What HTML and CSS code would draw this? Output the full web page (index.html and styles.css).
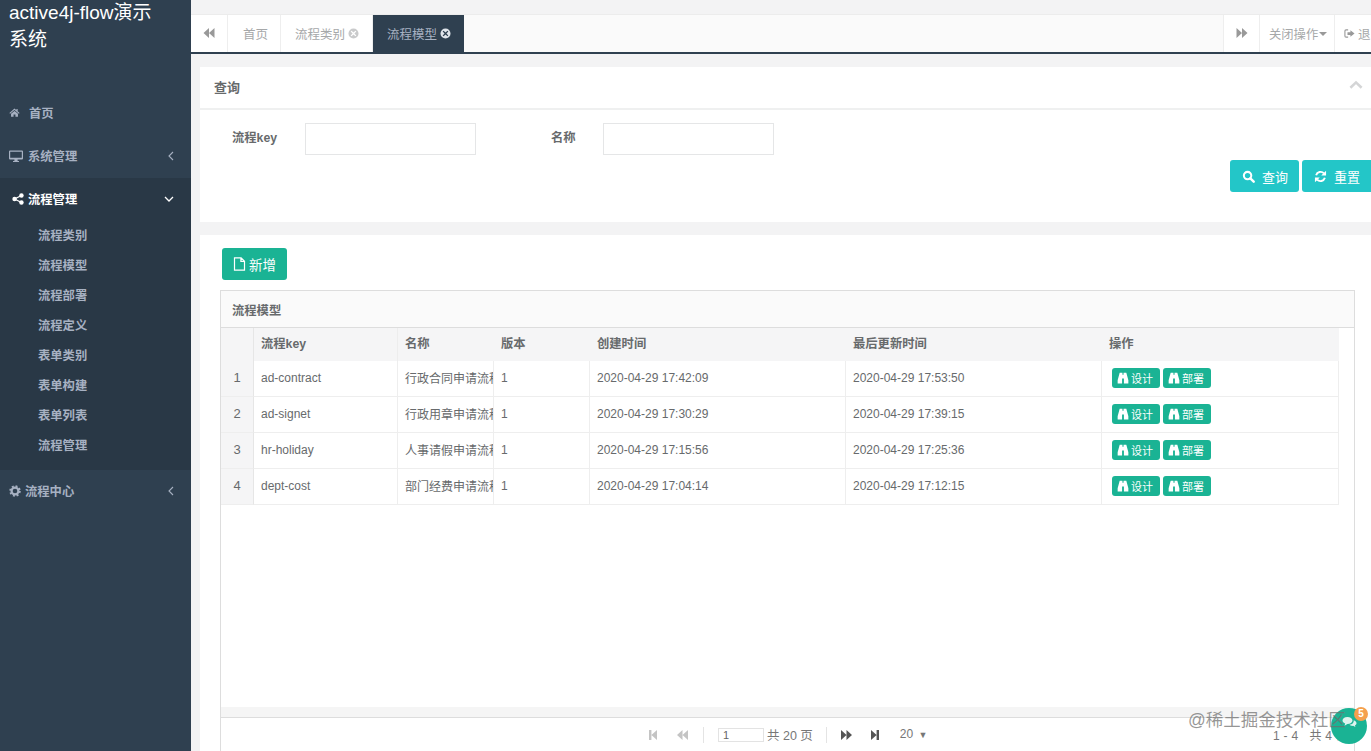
FILE: index.html
```html
<!DOCTYPE html>
<html lang="zh">
<head>
<meta charset="utf-8">
<title>active4j-flow演示系统</title>
<link rel="stylesheet" href="styles.css">
</head>
<body>
<svg class="defs" aria-hidden="true">
  <symbol id="i-home" viewBox="0 0 14 14"><path d="M7 2 L0.5 7.6 L1.4 8.6 L7 3.9 L12.6 8.6 L13.5 7.6 L11 5.4 V2.5 H9.4 V4 Z M7 5 L2.6 8.7 V12.5 H5.8 V9.5 H8.2 V12.5 H11.4 V8.7 Z"/></symbol>
  <symbol id="i-desktop" viewBox="0 0 14 14"><path fill-rule="evenodd" d="M1 1.5 H13 A1 1 0 0 1 14 2.5 V9.5 A1 1 0 0 1 13 10.5 H8.6 V12 H10 V13 H4 V12 H5.4 V10.5 H1 A1 1 0 0 1 0 9.5 V2.5 A1 1 0 0 1 1 1.5 Z M1.2 2.7 V8.8 H12.8 V2.7 Z"/></symbol>
  <symbol id="i-share" viewBox="0 0 14 14"><circle cx="3" cy="7" r="2.6"/><circle cx="11" cy="2.9" r="2.6"/><circle cx="11" cy="11.1" r="2.6"/><path d="M3 7 L11 2.9 M3 7 L11 11.1" stroke="currentColor" stroke-width="1.6"/></symbol>
  <symbol id="i-cog" viewBox="0 0 14 14"><circle cx="7" cy="7" r="4" fill="none" stroke="currentColor" stroke-width="2.6"/><circle cx="7" cy="7" r="5.6" fill="none" stroke="currentColor" stroke-width="2.2" stroke-dasharray="2.2 2.2"/></symbol>
  <symbol id="i-left" viewBox="0 0 8 12"><path d="M6 2 L2 6 L6 10" fill="none" stroke="currentColor" stroke-width="1.1"/></symbol>
  <symbol id="i-down" viewBox="0 0 12 8"><path d="M2 2 L6 6 L10 2" fill="none" stroke="currentColor" stroke-width="1.3"/></symbol>
  <symbol id="i-up" viewBox="0 0 12 8"><path d="M1.2 6.4 L6 1.8 L10.8 6.4" fill="none" stroke="currentColor" stroke-width="2.2"/></symbol>
  <symbol id="i-back" viewBox="0 0 12 12"><path d="M6 1 V11 L0.5 6 Z M11.5 1 V11 L6 6 Z"/></symbol>
  <symbol id="i-fwd" viewBox="0 0 12 12"><path d="M6 1 V11 L11.5 6 Z M0.5 1 V11 L6 6 Z"/></symbol>
  <symbol id="i-first" viewBox="0 0 10 12"><path d="M1 1 H3.4 V11 H1 Z M9 1 V11 L3.4 6 Z"/></symbol>
  <symbol id="i-last" viewBox="0 0 10 12"><path d="M9 1 H6.6 V11 H9 Z M1 1 V11 L6.6 6 Z"/></symbol>
  <symbol id="i-close" viewBox="0 0 12 12"><path fill-rule="evenodd" d="M6 .5 A5.5 5.5 0 1 1 6 11.5 A5.5 5.5 0 1 1 6 .5 Z M3.9 2.9 L2.9 3.9 L5 6 L2.9 8.1 L3.9 9.1 L6 7 L8.1 9.1 L9.1 8.1 L7 6 L9.1 3.9 L8.1 2.9 L6 5 Z"/></symbol>
  <symbol id="i-signout" viewBox="0 0 12 12"><path d="M4.5 2 H2.2 A1.2 1.2 0 0 0 1 3.2 V8.8 A1.2 1.2 0 0 0 2.2 10 H4.5" fill="none" stroke="currentColor" stroke-width="1.2"/><path d="M7 2.5 L11.5 6 L7 9.5 V7.5 H3.8 V4.5 H7 Z"/></symbol>
  <symbol id="i-search" viewBox="0 0 14 14"><circle cx="6" cy="6" r="4" fill="none" stroke="currentColor" stroke-width="2.2"/><path d="M9 9 L12.6 12.6" stroke="currentColor" stroke-width="2.6" stroke-linecap="round"/></symbol>
  <symbol id="i-refresh" viewBox="0 0 14 14"><path d="M2.3 5.6 A5 5 0 0 1 10.7 3.6" fill="none" stroke="currentColor" stroke-width="2.1"/><path d="M13 .8 V6 H7.8 Z"/><path d="M11.7 8.4 A5 5 0 0 1 3.3 10.4" fill="none" stroke="currentColor" stroke-width="2.1"/><path d="M1 13.2 V8 H6.2 Z"/></symbol>
  <symbol id="i-file" viewBox="0 0 12 14"><path d="M1 .8 H7.6 L11 4.2 V13.2 H1 Z M7.4 1 V4.4 H11" fill="none" stroke="currentColor" stroke-width="1.2"/></symbol>
  <symbol id="i-bino" viewBox="0 0 12 13"><path d="M2.4 .8 H5.4 V3 H6.6 V.8 H9.6 L11.8 9 V12.4 H7 V7 H5 V12.4 H.2 V9 Z"/></symbol>
  <symbol id="i-chat" viewBox="0 0 18 14"><path d="M6.5 1 C10 1 12.6 2.9 12.6 5.2 C12.6 7.5 10 9.4 6.5 9.4 L3 11.4 L3.8 8.8 C2 8 .6 6.8 .6 5.2 C.6 2.9 3 1 6.5 1 Z"/><path d="M14 5 C16 5.7 17.4 7 17.4 8.4 C17.4 9.6 16.6 10.5 15.6 11 L16 13 L13.4 11.6 C11.8 11.8 10 11.4 9 10.4 C12 10.2 14.4 8.2 14 5 Z"/></symbol>
</svg>

<div class="app">
  <aside class="sidebar">
    <div class="logo">active4j-flow演示系统</div>
    <nav class="nav">
      <a class="nav-item"><svg class="nav-ico"><use href="#i-home"/></svg><span>首页</span></a>
      <a class="nav-item"><svg class="nav-ico wide"><use href="#i-desktop"/></svg><span>系统管理</span><svg class="arrow"><use href="#i-left"/></svg></a>
      <div class="nav-open">
        <a class="nav-item active"><svg class="nav-ico share"><use href="#i-share"/></svg><span>流程管理</span><svg class="arrow down"><use href="#i-down"/></svg></a>
        <a class="sub-item">流程类别</a>
        <a class="sub-item">流程模型</a>
        <a class="sub-item">流程部署</a>
        <a class="sub-item">流程定义</a>
        <a class="sub-item">表单类别</a>
        <a class="sub-item">表单构建</a>
        <a class="sub-item">表单列表</a>
        <a class="sub-item">流程管理</a>
      </div>
      <a class="nav-item"><svg class="nav-ico cog"><use href="#i-cog"/></svg><span>流程中心</span><svg class="arrow"><use href="#i-left"/></svg></a>
    </nav>
  </aside>

  <main class="main">
    <div class="tabs">
      <button class="tab-nav"><svg class="tab-ico"><use href="#i-back"/></svg></button>
      <div class="tab-list">
        <span class="tab">首页</span>
        <span class="tab">流程类别<svg class="tab-close"><use href="#i-close"/></svg></span>
        <span class="tab current">流程模型<svg class="tab-close"><use href="#i-close"/></svg></span>
      </div>
      <button class="tab-nav fwd"><svg class="tab-ico"><use href="#i-fwd"/></svg></button>
      <span class="tab-action">关闭操作<i class="caret"></i></span>
      <span class="tab-exit"><svg class="exit-ico"><use href="#i-signout"/></svg>退出</span>
    </div>

    <div class="content">
      <section class="panel query">
        <header class="panel-head"><h5>查询</h5><svg class="collapse"><use href="#i-up"/></svg></header>
        <div class="query-body">
          <div class="form-row">
            <label class="form-label">流程key</label><input class="form-input" type="text">
            <label class="form-label second">名称</label><input class="form-input" type="text">
          </div>
          <div class="query-actions">
            <button class="btn-teal"><svg class="btn-ico"><use href="#i-search"/></svg>查询</button>
            <button class="btn-teal"><svg class="btn-ico"><use href="#i-refresh"/></svg>重置</button>
          </div>
        </div>
      </section>

      <section class="panel list">
        <button class="btn-add"><svg class="add-ico"><use href="#i-file"/></svg>新增</button>
        <div class="grid-box">
          <div class="grid-caption">流程模型</div>
          <div class="grid-view">
            <table class="grid">
              <colgroup>
                <col class="c-rn"><col class="c-key"><col class="c-ver"><col class="c-ver"><col class="c-time"><col class="c-time"><col class="c-op">
              </colgroup>
              <thead>
                <tr><th></th><th>流程key</th><th>名称</th><th>版本</th><th>创建时间</th><th>最后更新时间</th><th>操作</th></tr>
              </thead>
              <tbody>
                <tr><td class="rn">1</td><td>ad-contract</td><td>行政合同申请流程</td><td>1</td><td>2020-04-29 17:42:09</td><td>2020-04-29 17:53:50</td><td><a class="mini"><svg class="mini-ico"><use href="#i-bino"/></svg>设计</a><a class="mini"><svg class="mini-ico"><use href="#i-bino"/></svg>部署</a></td></tr>
                <tr><td class="rn">2</td><td>ad-signet</td><td>行政用章申请流程</td><td>1</td><td>2020-04-29 17:30:29</td><td>2020-04-29 17:39:15</td><td><a class="mini"><svg class="mini-ico"><use href="#i-bino"/></svg>设计</a><a class="mini"><svg class="mini-ico"><use href="#i-bino"/></svg>部署</a></td></tr>
                <tr><td class="rn">3</td><td>hr-holiday</td><td>人事请假申请流程</td><td>1</td><td>2020-04-29 17:15:56</td><td>2020-04-29 17:25:36</td><td><a class="mini"><svg class="mini-ico"><use href="#i-bino"/></svg>设计</a><a class="mini"><svg class="mini-ico"><use href="#i-bino"/></svg>部署</a></td></tr>
                <tr><td class="rn">4</td><td>dept-cost</td><td>部门经费申请流程</td><td>1</td><td>2020-04-29 17:04:14</td><td>2020-04-29 17:12:15</td><td><a class="mini"><svg class="mini-ico"><use href="#i-bino"/></svg>设计</a><a class="mini"><svg class="mini-ico"><use href="#i-bino"/></svg>部署</a></td></tr>
              </tbody>
            </table>
          </div>
          <div class="grid-band"></div>
          <div class="pager">
            <svg class="pg-ico off"><use href="#i-first"/></svg>
            <svg class="pg-ico off wide"><use href="#i-back"/></svg>
            <i class="pg-sep"></i>
            <input class="pg-input" type="text" value="1">
            <span class="pg-total">共 20 页</span>
            <i class="pg-sep two"></i>
            <svg class="pg-ico wide"><use href="#i-fwd"/></svg>
            <svg class="pg-ico last"><use href="#i-last"/></svg>
            <span class="pg-size">20 <small>▼</small></span>
            <span class="pg-info">1 - 4 &nbsp; 共 4 条</span>
          </div>
        </div>
      </section>
    </div>
  </main>
</div>

<div class="chat"><svg class="chat-ico"><use href="#i-chat"/></svg><b class="chat-badge">5</b></div>
<div class="watermark">@稀土掘金技术社区</div>
</body>
</html>
```

FILE: styles.css
```css
* { box-sizing: border-box; }
html, body { margin: 0; height: 100%; overflow: hidden; }
body {
  font-family: "Liberation Sans", "Noto Sans CJK SC", sans-serif;
  font-size: 13px;
  color: #676a6c;
  background: #f3f3f4;
}
.defs { display: none; }
svg { fill: currentColor; display: block; flex: none; }
button { font: inherit; border: 0; padding: 0; }

.app { display: flex; height: 751px; width: 1371px; overflow: hidden; }

/* sidebar */
.sidebar { width: 191px; flex: none; background: #2f4050; color: #a7b1c2; }
.logo { color: #fff; font-size: 19px; line-height: 27px; padding: 0 30px 0 9px; height: 93px; margin-top: -1px; }
.nav { display: flex; flex-direction: column; }
.nav-item {
  height: 43px; display: flex; align-items: center; padding: 0 0 2px 9px;
  font-weight: 700; font-size: 12.3px; color: #a7b1c2; position: relative;
}
.nav-ico { width: 11px; height: 11px; margin-right: 9px; }
.nav-ico.wide { width: 14px; height: 14px; margin-right: 5px; }
.nav-ico.share { width: 12px; height: 12px; margin: 0 4px 0 3px; color: #fff; }
.nav-ico.cog { width: 12px; height: 12px; margin-right: 4px; }
.arrow { width: 8px; height: 12px; position: absolute; right: 16px; top: 15px; }
.arrow.down { width: 12px; height: 8px; right: 16px; top: 17px; }
.nav-open { background: #293846; height: 292px; }
.nav-item.active { color: #fff; }
.sub-item { display: block; height: 30px; line-height: 31px; padding-left: 38px; font-weight: 700; font-size: 12.3px; color: #a7b1c2; }

/* main */
.main { flex: 1; min-width: 0; display: flex; flex-direction: column; overflow: hidden; }
.tabs {
  margin-top: 15px; height: 39px; flex: none; background: #fafafa;
  border-bottom: 2px solid #2f4050; display: flex; align-items: stretch;
  box-shadow: 0 -1px 0 #ececec; color: #999c9e;
}
.tab-nav { width: 37px; background: #fff; color: #999; border-right: 1px solid #eee; display: flex; align-items: center; justify-content: center; flex: none; }
.tab-nav.fwd { border-left: 1px solid #eee; }
.tab-ico { width: 12px; height: 12px; margin-top: -2px; }
.tab-list { flex: 1; display: flex; min-width: 0; }
.tab { padding: 0 13px 0 14px; display: flex; align-items: center; border-right: 1px solid #eee; background: #fff; white-space: nowrap; color: #a6a8a9; font-size: 12.5px; }
.tab:first-child { padding: 0 12px 0 15px; }
.tab.current { background: #2f4050; color: #a7b1c2; border-right-color: #2f4050; padding-right: 12px; }
.tab.current .tab-close { color: #dfe4ea; }
.tab-close { width: 11px; height: 11px; margin-left: 3px; color: #c9cacb; }
.tab-action { width: 75px; flex: none; background: #fff; border-right: 1px solid #eee; display: flex; align-items: center; padding-left: 9px; font-size: 12.3px; color: #a6a8a9; white-space: nowrap; }
.caret { width: 0; height: 0; border: 4px solid transparent; border-top-color: #999; border-bottom: 0; margin-left: 1px; }
.tab-exit { flex: none; width: 36px; background: #fff; display: flex; align-items: center; padding-left: 9px; font-size: 12.5px; color: #a6a8a9; white-space: nowrap; overflow: hidden; }
.exit-ico { width: 11px; height: 11px; margin-right: 3px; color: #999; }

.content { flex: 1; padding: 13px 0 0 9px; min-height: 0; display: flex; flex-direction: column; }
.panel { background: #fff; }
.query { height: 155px; flex: none; }
.panel-head { height: 43px; display: flex; align-items: center; justify-content: space-between; padding: 0 8px 3px 14px; border-bottom: 2px solid #eff0f0; }
.panel-head h5 { margin: 0; font-size: 13px; font-weight: 700; color: #676a6c; }
.collapse { width: 14px; height: 10px; color: #d4d5d6; margin-bottom: 3px; }
.query-body { padding: 13px 0 0 32px; }
.form-row { display: flex; align-items: center; height: 32px; }
.form-label { font-weight: 700; font-size: 12.3px; width: 73px; flex: none; padding-bottom: 4px; }
.form-label.second { width: 52px; margin-left: 75px; }
.form-input { width: 171px; height: 32px; border: 1px solid #e5e6e7; background: #fff; }
.query-actions { display: flex; justify-content: flex-end; gap: 3px; margin-top: 5px; margin-right: -2px; }
.btn-teal { width: 69px; height: 32px; background: #23c6c8; color: #fff; border-radius: 3px; display: flex; align-items: center; padding-left: 12px; font-size: 13px; }
.btn-teal + .btn-teal { width: 71px; }
.btn-ico { width: 13px; height: 13px; margin-right: 7px; }

.list { flex: 1; margin-top: 13px; padding: 13px 0 0 20px; min-height: 0; display: flex; flex-direction: column; }
.btn-add { width: 65px; height: 32px; margin-left: 2px; background: #1ab394; color: #fff; border-radius: 3px; display: flex; align-items: center; padding-left: 11px; font-size: 13.5px; flex: none; }
.add-ico { width: 13px; height: 14px; margin-right: 3px; }
.grid-box { flex: 1; margin-top: 10px; width: 1135px; border: 1px solid #ddd; border-width: 1px 1px 0 1px; display: flex; flex-direction: column; min-height: 0; }
.grid-caption { height: 37px; flex: none; background: #fafafa; border-bottom: 1px solid #ddd; padding: 2px 0 0 11px; font-weight: 700; font-size: 12.3px; line-height: 36px; }
.grid-view { flex: 1; min-height: 0; overflow: hidden; background: #fff; }
.grid { table-layout: fixed; border-collapse: separate; border-spacing: 0; width: 1118px; }
.c-rn { width: 33px; }
.c-key { width: 144px; }
.c-ver { width: 96px; }
.c-time { width: 256px; }
.c-op { width: 237px; }
.grid th { height: 33px; background: #f5f5f6; text-align: left; padding: 0 7px 3px; font-weight: 700; font-size: 12.3px; color: #676a6c; border-right: 1px solid #ededed; white-space: nowrap; }
.grid th:nth-child(n+3) { border-right-color: #f5f5f6; }
.grid th:first-child { border-right-color: #e6e6e6; }
.grid td { height: 36px; padding: 0 7px 2px; font-size: 12px; color: #676a6c; border-right: 1px solid #eee; border-bottom: 1px solid #eee; white-space: nowrap; overflow: hidden; }
.grid td:nth-child(3) { padding-right: 0; }
.grid td.rn { background: #f5f5f6; text-align: center; font-size: 13px; padding: 0 0 2px; border-right-color: #e6e6e6; }
.grid td:last-child { padding-left: 10px; }
.mini { display: inline-flex; align-items: center; width: 48px; height: 20px; background: #1ab394; color: #fff; border-radius: 3px; font-size: 11px; padding-left: 5px; margin-right: 3px; vertical-align: middle; }
.mini-ico { width: 12px; height: 12px; margin-right: 2px; }
.grid-band { height: 11px; flex: none; background: #f5f5f5; border-bottom: 1px solid #ddd; }
.pager { height: 33px; flex: none; background: #fff; display: flex; align-items: center; position: relative; padding-left: 427px; font-size: 12.5px; color: #777; }
.pg-ico { width: 10px; height: 12px; color: #555; }
.pg-ico.off { color: #c4c4c4; }
.pg-ico.wide { width: 13px; }
.pg-ico.off + .pg-ico.off { margin-left: 18px; }
.pg-sep { width: 1px; height: 16px; background: #e4e4e4; margin: 0 14px 0 14px; }
.pg-input { width: 46px; height: 14px; border: 1px solid #e3e3e3; font: 11px "Liberation Sans", sans-serif; color: #666; padding: 0 4px; }
.pg-total { margin-left: 3px; }
.pg-sep.two { margin: 0 13px 0 13px; }
.pg-ico.last { margin-left: 17px; }
.pg-size { margin-left: 20px; font-size: 12px; margin-top: -2px; }
.pg-size small { font-size: 9px; margin-left: 2px; }
.pg-info { position: absolute; left: 1052px; top: 8px; font-size: 12px; white-space: nowrap; letter-spacing: .3px; }

/* overlays */
.watermark { position: absolute; left: 1188px; top: 708px; font-size: 17.5px; line-height: 24px; color: rgba(110,110,110,.72); white-space: nowrap; }
.chat { position: absolute; left: 1331px; top: 708px; width: 36px; height: 36px; border-radius: 50%; background: #1ab394; display: flex; align-items: center; justify-content: center; }
.chat-ico { width: 15px; height: 12px; color: #dff3ee; margin: -8px 0 0 0; }
.chat-badge { position: absolute; right: -1px; top: -1px; width: 14px; height: 14px; border-radius: 50%; background: #f5a04e; color: #fff; font-size: 10px; line-height: 14px; text-align: center; }
```
